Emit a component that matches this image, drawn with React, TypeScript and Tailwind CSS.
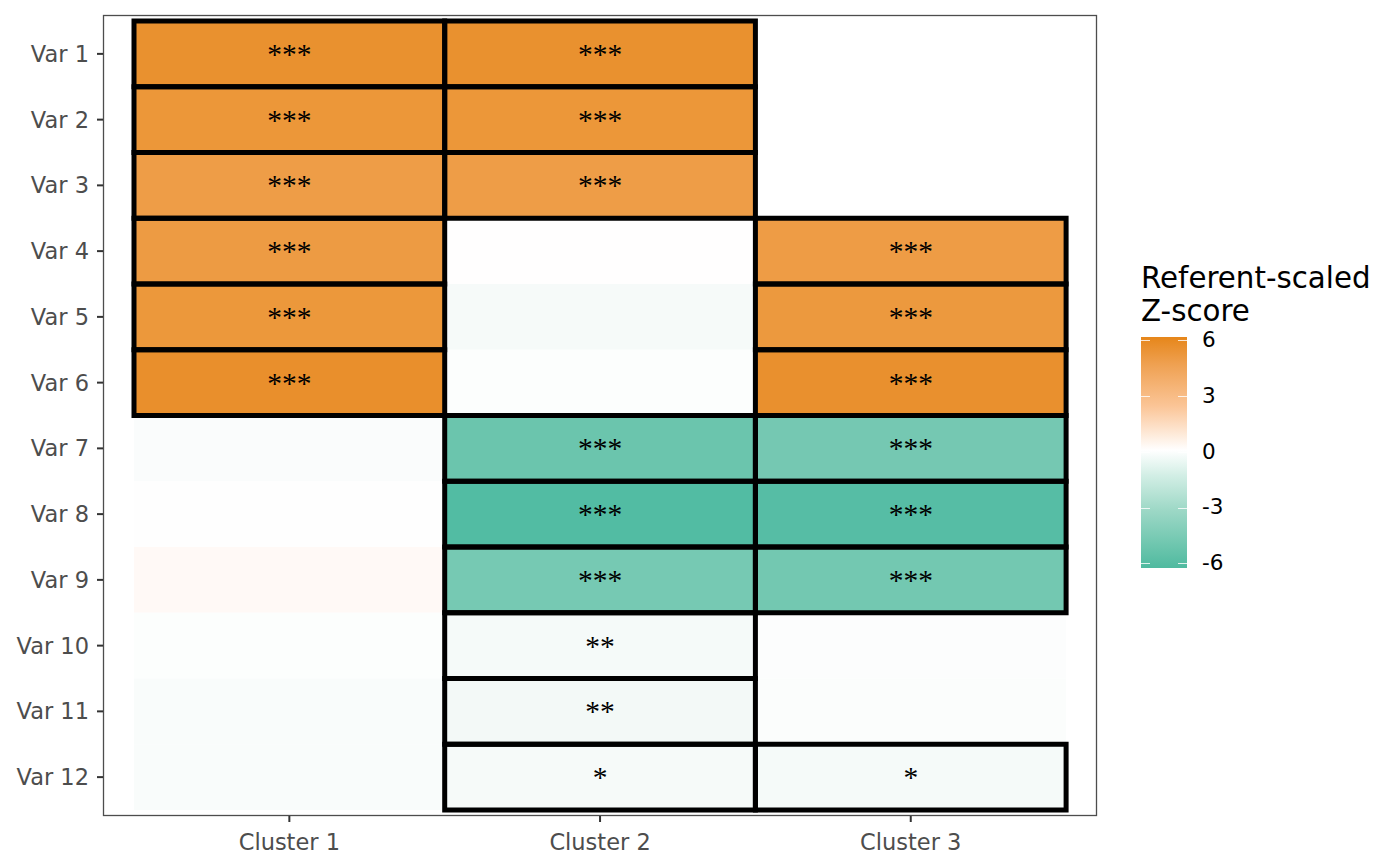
const COLS = ['Cluster 1', 'Cluster 2', 'Cluster 3'];

type Cell = { fill: string; sig?: string };

// one row per variable, fills taken from the referent-scaled z-score palette
const ROWS: Cell[][] = [
  [{ fill: '#E9912F', sig: '***' }, { fill: '#E9912F', sig: '***' }, { fill: '#FFFFFF' }],
  [{ fill: '#EC9739', sig: '***' }, { fill: '#EC9739', sig: '***' }, { fill: '#FFFFFF' }],
  [{ fill: '#EE9D47', sig: '***' }, { fill: '#EE9D47', sig: '***' }, { fill: '#FFFFFF' }],
  [{ fill: '#ED9B43', sig: '***' }, { fill: '#FFFEFE' }, { fill: '#EE9C45', sig: '***' }],
  [{ fill: '#EC983B', sig: '***' }, { fill: '#F6FAF9' }, { fill: '#EC993E', sig: '***' }],
  [{ fill: '#E98F2C', sig: '***' }, { fill: '#FCFEFD' }, { fill: '#E9902E', sig: '***' }],
  [{ fill: '#FAFCFC' }, { fill: '#6BC5AD', sig: '***' }, { fill: '#75C8B2', sig: '***' }],
  [{ fill: '#FEFEFE' }, { fill: '#52BCA3', sig: '***' }, { fill: '#56BDA5', sig: '***' }],
  [{ fill: '#FFF9F6' }, { fill: '#76C9B3', sig: '***' }, { fill: '#73C8B1', sig: '***' }],
  [{ fill: '#FCFEFD' }, { fill: '#F5FAF9', sig: '**' }, { fill: '#FCFDFD' }],
  [{ fill: '#F9FCFB' }, { fill: '#F3F9F7', sig: '**' }, { fill: '#FBFDFC' }],
  [{ fill: '#F9FCFB' }, { fill: '#F6FAF9', sig: '*' }, { fill: '#F5FAF9', sig: '*' }],
];

const X0 = 134;
const CW = 310.7;
const Y0 = 21;
const RH = 65.75;

function Heatmap() {
  return (
    <svg width={1120} height={866} className="shrink-0 font-['DejaVu_Sans',sans-serif]">
      {/* tile fills */}
      {ROWS.map((row, r) =>
        row.map((c, k) => (
          <rect key={`f${r}-${k}`} x={X0 + k * CW} y={Y0 + r * RH} width={CW} height={RH} fill={c.fill} />
        )),
      )}
      {/* outlines for significant tiles */}
      {ROWS.map((row, r) =>
        row.map((c, k) =>
          c.sig ? (
            <rect
              key={`b${r}-${k}`}
              x={X0 + k * CW}
              y={Y0 + r * RH}
              width={CW}
              height={RH}
              fill="none"
              stroke="#000"
              strokeWidth={5}
            />
          ) : null,
        ),
      )}
      {ROWS.map((row, r) =>
        row.map((c, k) =>
          c.sig ? (
            <text
              key={`t${r}-${k}`}
              x={X0 + k * CW + CW / 2}
              y={Y0 + r * RH + RH / 2}
              textAnchor="middle"
              dominantBaseline="central"
              className="fill-black text-[29.5px] font-['Liberation_Serif',serif]"
            >
              {c.sig}
            </text>
          ) : null,
        ),
      )}

      {/* panel border */}
      <rect x={103.5} y={15.5} width={993} height={800} fill="none" stroke="#4d4d4d" strokeWidth={1.3} />

      {/* y axis */}
      {ROWS.map((_, r) => {
        const y = Y0 + r * RH + RH / 2;
        return (
          <g key={`y${r}`}>
            <line x1={97} x2={103} y1={y} y2={y} stroke="#333" strokeWidth={2} />
            <text x={89} y={y} textAnchor="end" dominantBaseline="central" className="fill-[#4d4d4d] text-[22.5px]">
              Var {r + 1}
            </text>
          </g>
        );
      })}

      {/* x axis */}
      {COLS.map((name, k) => {
        const x = X0 + k * CW + CW / 2;
        return (
          <g key={name}>
            <line x1={x} x2={x} y1={816} y2={822} stroke="#333" strokeWidth={2} />
            <text x={x} y={850} textAnchor="middle" className="fill-[#4d4d4d] text-[22.5px]">
              {name}
            </text>
          </g>
        );
      })}
    </svg>
  );
}

function Legend() {
  const ticks = ['6', '3', '0', '-3', '-6'];
  return (
    <div className="flex flex-col pt-[262px] pl-[21px] font-['DejaVu_Sans',sans-serif] text-black">
      <div className="whitespace-nowrap text-[29.3px] leading-[33px]">
        Referent-scaled
        <br />
        Z-score
      </div>
      <div className="mt-[9px] flex gap-[15px]">
        <div className="relative h-[231px] w-[46px] bg-[linear-gradient(to_bottom,#E6861A_0%,#EFA152_12%,#FBC597_30%,#FFFFFF_49%,#D2EEE5_60%,#9DD8C6_75%,#4FBA9F_100%)]">
          {[3, 58.5, 114.5, 170.5, 226].map((t) => (
            <div key={t} className="absolute inset-x-0 flex justify-between" style={{ top: t }}>
              <span className="h-px w-[9px] bg-white/80" />
              <span className="h-px w-[9px] bg-white/80" />
            </div>
          ))}
        </div>
        <div className="relative h-[231px] w-[40px]">
          {ticks.map((t, i) => (
            <span key={t} className="absolute left-0 text-[21.5px] leading-none" style={{ top: 3 + i * 55.8 - 11 }}>
              {t}
            </span>
          ))}
        </div>
      </div>
    </div>
  );
}

export default function App() {
  return (
    <div className="flex h-[866px] w-[1400px] overflow-hidden bg-white">
      <Heatmap />
      <Legend />
    </div>
  );
}
